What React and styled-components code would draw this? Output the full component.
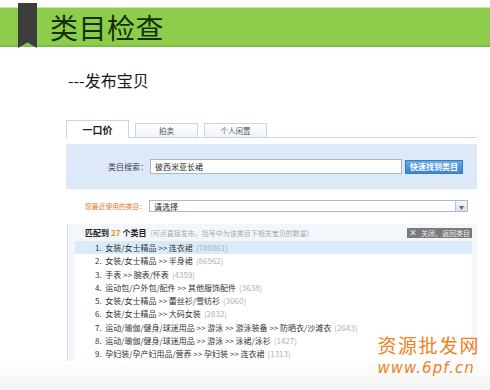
import React from 'react';
import styled, { createGlobalStyle } from 'styled-components';

const GlobalStyle = createGlobalStyle`
    html, body {
        margin: 0;
        padding: 0;
        background: #ffffff;
    }
    body {
        font-family: "Noto Sans CJK SC", "Noto Sans", sans-serif;
        color: #333;
    }
`;

const Slide = styled.div`
    position: relative;
    width: 490px;
    height: 390px;
    overflow: hidden;
    padding-top: 7px;
    box-sizing: border-box;
    background: linear-gradient(to bottom, #ffffff 0, #ffffff 360px, #f3f3f3 390px);
`;

const Banner = styled.header`
    display: flex;
    align-items: flex-start;
    height: 40px;
    background: #8dcd4c;
    border-top: 1px solid #c8e6a8;
    border-bottom: 2px solid #80bb48;
    box-sizing: border-box;
`;
const Ribbon = styled.div`
    width: 19px;
    height: 45px;
    margin: -5px 0 0 18px;
    background: #3d3d3d;
    clip-path: polygon(0 0, 100% 0, 100% 100%, 50% 88%, 0 100%);
`;
const Title = styled.h1`
    margin: 0 0 0 13px;
    font-size: 28px;
    line-height: 38px;
    font-weight: 400;
    color: #172f06;
    letter-spacing: 0.5px;
`;

const Subtitle = styled.h2`
    margin: 23px 0 0 68px;
    font-size: 16px;
    line-height: 20px;
    font-weight: 400;
    color: #1a1a1a;
`;

const Shot = styled.section`
    margin: 29px 0 0 66px;
    width: 411px;
    font-size: 8px;
`;

const TabBar = styled.nav`
    display: flex;
    align-items: flex-end;
    gap: 6px;
    height: 18px;
    border-bottom: 1px solid #c9d7e8;
`;
const Tab = styled.div`
    width: 63px;
    height: ${p => (p.$active ? '18px' : '14px')};
    margin-bottom: ${p => (p.$active ? '-1px' : '0')};
    box-sizing: border-box;
    border: 1px solid #c9d5e4;
    border-bottom: none;
    background: ${p => (p.$active ? '#ffffff' : 'linear-gradient(#ffffff, #eef3f9)')};
    display: flex;
    align-items: center;
    justify-content: center;
    font-size: ${p => (p.$active ? '10px' : '7.5px')};
    font-weight: ${p => (p.$active ? 700 : 400)};
    color: ${p => (p.$active ? '#222' : '#555')};
`;

const SearchBox = styled.div`
    display: flex;
    align-items: center;
    margin-top: 6px;
    height: 45px;
    padding-left: 42px;
    background: #dde9f8;
`;
const Label = styled.span`
    width: ${p => p.$width || 40}px;
    text-align: right;
    font-size: ${p => p.$size || 8}px;
    color: ${p => p.$color || '#444'};
    white-space: nowrap;
`;
const Input = styled.div`
    width: 252px;
    height: 15px;
    margin-left: 2px;
    box-sizing: border-box;
    border: 1px solid #a9b6c6;
    background: #fff;
    padding-left: 4px;
    display: flex;
    align-items: center;
    color: #222;
`;
const Button = styled.div`
    width: 58px;
    height: 14px;
    margin-left: 3px;
    box-sizing: border-box;
    border: 1px solid #3b7dc2;
    background: linear-gradient(#63aae8, #3a86d2);
    color: #fff;
    font-weight: 700;
    display: flex;
    align-items: center;
    justify-content: center;
`;

const RecentRow = styled.div`
    display: flex;
    align-items: center;
    margin-top: 10px;
    height: 14px;
    padding-left: 19px;
`;
const Select = styled.div`
    width: 319px;
    height: 12px;
    margin-left: 3px;
    box-sizing: border-box;
    border: 1px solid #aab8c8;
    display: flex;
    align-items: center;
    justify-content: space-between;
    padding-left: 4px;
    color: #222;
`;
const Arrow = styled.span`
    width: 11px;
    height: 10px;
    background: linear-gradient(#f2f6fb, #d8e3ef);
    border-left: 1px solid #b5c3d3;
    display: flex;
    align-items: center;
    justify-content: center;
    color: #5a6b80;
    font-size: 5px;
`;

const Results = styled.div`
    margin: 11px 0 0 1px;
    border-left: 1px solid #d3dfeb;
    padding: 0 5px 0 7px;
    background: #f3f7fb;
`;
const ResultsHead = styled.div`
    display: flex;
    align-items: center;
    justify-content: space-between;
    height: 17px;
    padding-left: 10px;
`;
const Count = styled.span`
    font-weight: 700;
    color: #222;
    white-space: nowrap;
    em {
        font-style: normal;
        color: #f08a24;
        margin: 0 2px;
    }
`;
const Hint = styled.span`
    font-weight: 400;
    color: #a8a8a8;
    font-size: 7px;
    margin-left: 4px;
`;
const CloseButton = styled.div`
    width: 65px;
    height: 10px;
    background: #7a7a7a;
    color: #eee;
    font-size: 7px;
    display: flex;
    align-items: center;
    justify-content: center;
    gap: 4px;
    b {
        font-size: 8px;
    }
`;
const List = styled.ol`
    margin: 0;
    padding: 0;
    list-style: none;
    background: #fff;
`;
const Row = styled.li`
    height: 13.3px;
    line-height: 13.3px;
    padding-left: 20px;
    background: ${p => (p.$active ? '#d9ebf9' : 'transparent')};
    color: #333;
    white-space: nowrap;
    font-size: 8px;
    span {
        color: #b0b0b0;
        margin-left: 3px;
    }
`;

const Watermark = styled.div`
    position: absolute;
    right: 10px;
    bottom: 14px;
    display: flex;
    flex-direction: column;
    gap: 4px;
    color: #f07f1c;
`;
const WmTitle = styled.div`
    font-size: 19px;
    line-height: 22px;
    letter-spacing: 1.5px;
`;
const WmUrl = styled.div`
    font-family: "DejaVu Sans", sans-serif;
    font-style: italic;
    font-size: 15px;
    line-height: 16px;
    letter-spacing: 1px;
`;

const rows = [
    ['女装/女士精品 >> 连衣裙', '780861'],
    ['女装/女士精品 >> 半身裙', '86962'],
    ['手表 >> 腕表/怀表', '4359'],
    ['运动包/户外包/配件 >> 其他服饰配件', '3638'],
    ['女装/女士精品 >> 蕾丝衫/雪纺衫', '3060'],
    ['女装/女士精品 >> 大码女装', '2832'],
    ['运动/瑜伽/健身/球迷用品 >> 游泳 >> 游泳装备 >> 防晒衣/沙滩衣', '2643'],
    ['运动/瑜伽/健身/球迷用品 >> 游泳 >> 泳裙/泳衫', '1427'],
    ['孕妇装/孕产妇用品/营养 >> 孕妇装 >> 连衣裙', '1313'],
];

function App() {
    return (
        <>
            <GlobalStyle />
            <Slide>
                <Banner>
                    <Ribbon />
                    <Title>类目检查</Title>
                </Banner>
                <Subtitle>---发布宝贝</Subtitle>
                <Shot>
                    <TabBar>
                        <Tab $active>一口价</Tab>
                        <Tab>拍卖</Tab>
                        <Tab>个人闲置</Tab>
                    </TabBar>
                    <SearchBox>
                        <Label>类目搜索：</Label>
                        <Input>彼西米亚长裙</Input>
                        <Button>快速找到类目</Button>
                    </SearchBox>
                    <RecentRow>
                        <Label $width={61} $size={6.8} $color="#e8742a">您最近使用的类目：</Label>
                        <Select>
                            请选择
                            <Arrow>▼</Arrow>
                        </Select>
                    </RecentRow>
                    <Results>
                        <ResultsHead>
                            <Count>
                                匹配到<em>27</em>个类目
                                <Hint>(可点直接发布，括号中为该类目下相关宝贝的数量)</Hint>
                            </Count>
                            <CloseButton><b>×</b>关闭，返回类目</CloseButton>
                        </ResultsHead>
                        <List>
                            {rows.map(([path, n], i) => (
                                <Row key={i} $active={i === 0}>
                                    {i + 1}.&nbsp;&nbsp;{path}<span>({n})</span>
                                </Row>
                            ))}
                        </List>
                    </Results>
                </Shot>
                <Watermark>
                    <WmTitle>资源批发网</WmTitle>
                    <WmUrl>www.6pf.cn</WmUrl>
                </Watermark>
            </Slide>
        </>
    );
}

export default App;
